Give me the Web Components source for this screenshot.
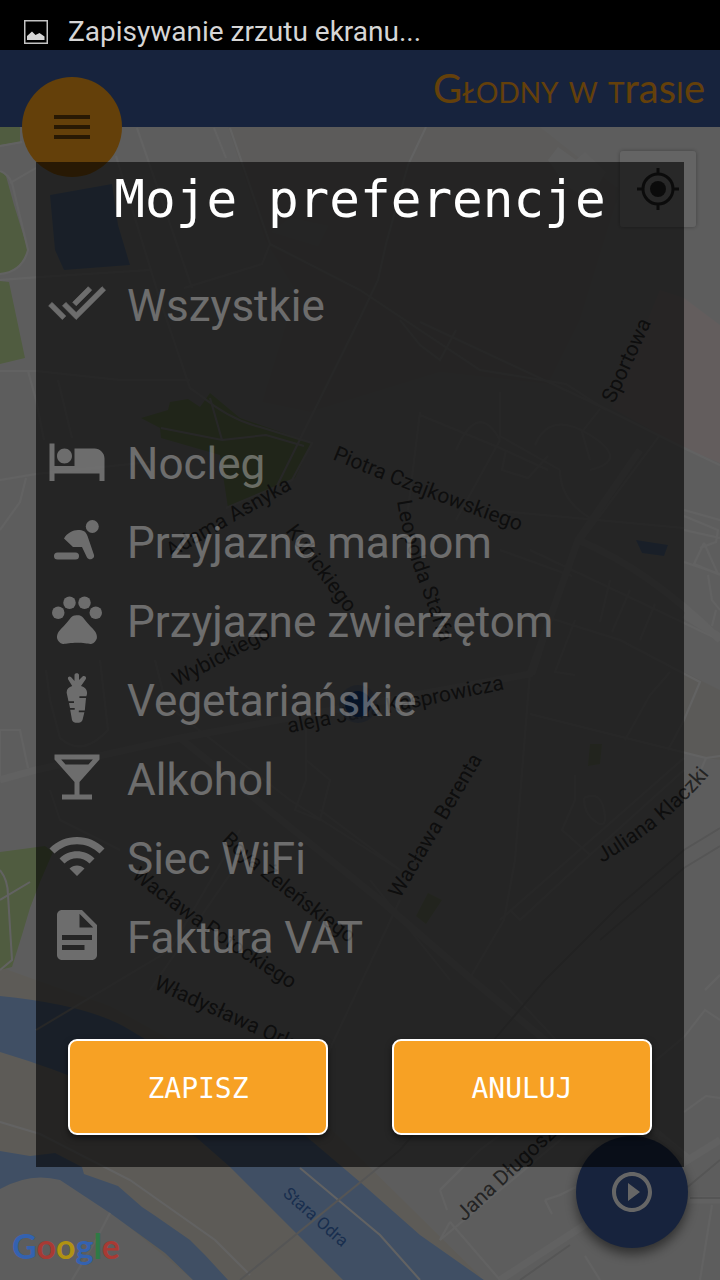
<!DOCTYPE html>
<html lang="pl">
<head>
<meta charset="utf-8">
<meta name="viewport" content="width=device-width, initial-scale=1">
<title>Głodny w trasie</title>
<style>
  body {
    margin: 0;
    background: #000;
    font-family: Roboto, "Noto Sans", sans-serif;
  }
</style>
</head>
<body>
<app-screen>
  <status-bar slot="status">Zapisywanie zrzutu ekranu...</status-bar>
  <title-bar slot="title"></title-bar>
  <city-map slot="map"></city-map>
  <round-button slot="menu" kind="menu" label="Menu"></round-button>
  <locate-button slot="locate"></locate-button>
  <round-button slot="start" kind="start" label="Start"></round-button>
  <google-logo slot="logo"></google-logo>
  <preferences-dialog heading="Moje preferencje">
    <preference-item slot="all" icon="all">Wszystkie</preference-item>
    <preference-item icon="bed">Nocleg</preference-item>
    <preference-item icon="baby">Przyjazne mamom</preference-item>
    <preference-item icon="paw">Przyjazne zwierzętom</preference-item>
    <preference-item icon="carrot">Vegetariańskie</preference-item>
    <preference-item icon="bar">Alkohol</preference-item>
    <preference-item icon="wifi">Siec WiFi</preference-item>
    <preference-item icon="invoice">Faktura VAT</preference-item>
    <action-button slot="actions">ZAPISZ</action-button>
    <action-button slot="actions">ANULUJ</action-button>
  </preferences-dialog>
</app-screen>

<script>
'use strict';

const icons = {
  all: `<svg viewBox="-0.25 0 24.500 24.500"><path stroke="#fff" stroke-width=".3" d="M18 7l-1.41-1.41-6.34 6.34 1.41 1.41L18 7zm4.24-1.41L11.66 16.17 7.48 12l-1.41 1.41L11.66 19l12-12-1.42-1.41zM.41 13.41L6 19l1.41-1.41L1.83 12 .41 13.41z"/></svg>`,
  bed: `<svg viewBox="0 0 24 24"><path d="M7 13c1.66 0 3-1.34 3-3S8.66 7 7 7s-3 1.34-3 3 1.34 3 3 3zm12-6h-8v7H3V5H1v15h2v-3h18v3h2v-9c0-2.21-1.79-4-4-4z"/></svg>`,
  baby: `<svg viewBox="0 -3 60 60"><circle cx="45.300" cy="13.500" r="6.500"/><rect x="7" y="39.500" width="25" height="7" rx="3.500"/><path d="M17 25.500C20 20 26 17 31 17c5 0 8 1.500 9.500 6L47 42c1 4-5 6-7 2.500L35 34h-9z"/></svg>`,
  paw: `<svg viewBox="0 0 24 24"><circle cx="4.500" cy="9.500" r="2.500"/><circle cx="9" cy="5.500" r="2.500"/><circle cx="15" cy="5.500" r="2.500"/><circle cx="19.500" cy="9.500" r="2.500"/><path d="M17.340 14.860c-.87-1.020-1.600-1.890-2.480-2.910-.46-.54-1.050-1.080-1.750-1.320-.11-.04-.22-.07-.33-.09-.25-.04-.52-.04-.78-.04s-.53 0-.79.05c-.11.020-.22.050-.33.090-.7.240-1.280.780-1.750 1.320-.87 1.020-1.600 1.890-2.480 2.910-1.310 1.310-2.920 2.760-2.620 4.790.29 1.020 1.020 2.030 2.330 2.320.73.150 3.060-.44 5.540-.44h.18c2.480 0 4.810.58 5.540.44 1.310-.29 2.040-1.310 2.330-2.320.31-2.040-1.300-3.490-2.610-4.800z"/></svg>`,
  carrot: `<svg viewBox="0 -3 60 60"><path d="M27.500 4c0-2.500 4.500-2.500 4.500 0v5l3.500-3.500c2-1.500 4.500.5 3.200 2.800L34 15c4 1 6.500 4 6 8l-.6 2.300h-7v1.600H39L37.800 39.400h-6v1.800h5.600L35.500 49c-1 3.800-9.500 3.800-10.500 0l-1.800-10.200h4.500v-1.700H23l-1-5h5v-1.800h-5.500L19.700 22c-.4-3.500 2-6 5.500-7l-4-6.500c-1.200-2.500 1.500-4 3-2.200L27.500 10z"/></svg>`,
  bar: `<svg viewBox="0 0 24 24"><path d="M21 5V3H3v2l8 9v5H6v2h12v-2h-5v-5l8-9zM7.430 7L5.660 5h12.690l-1.780 2H7.430z"/></svg>`,
  wifi: `<svg viewBox="0 0 24 24"><path d="M1 9l2 2c4.970-4.970 13.030-4.970 18 0l2-2C16.930 2.930 7.080 2.930 1 9zm8 8l3 3 3-3c-1.650-1.660-4.340-1.660-6 0zm-4-4l2 2c2.760-2.760 7.240-2.760 10 0l2-2C15.140 9.140 8.870 9.140 5 13z"/></svg>`,
  invoice: `<svg viewBox="0 0 24 24"><path d="M14 2H6c-1.100 0-2 .9-2 2v16c0 1.100.9 2 2 2h12c1.100 0 2-.9 2-2V8l-6-6zm4 12H6v-2h12v2zm-3 4H6v-2h9v2zm-2-9V3.500L18.500 9H13z"/></svg>`,
  menu: `<svg viewBox="0 0 24 24"><path d="M3 18h18v-2H3v2zm0-5h18v-2H3v2zm0-7v2h18V6H3z"/></svg>`,
  start: `<svg viewBox="0 0 24 24"><path d="M10 16.500l6-4.500-6-4.500v9zM12 2C6.480 2 2 6.480 2 12s4.480 10 10 10 10-4.480 10-10S17.520 2 12 2zm0 18c-4.410 0-8-3.590-8-8s3.590-8 8-8 8 3.590 8 8-3.590 8-8 8z"/></svg>`
};

// street names follow the line of their street
const labels = [
  ['Sportowa', 'M614 404L663 297'],
  ['Piotra Czajkowskiego', 'M332 459Q430 500 545 540'],
  ['Leopolda Staffa', 'M397 501Q403 540 418 580T460 700'],
  ['Adama Asnyka', 'M171 558L320 473'],
  ['Kubickiego', 'M285 531L378 656'],
  ['Wybickiego', 'M177 687L300 622'],
  ['aleja Jana Kasprowicza', 'M289 733Q400 711 540 682'],
  ['Wacława Berenta', 'M400 899L499 731'],
  ['Juliana Klaczki', 'M602 863Q682 817 726 752'],
  ['Boya Żeleńskiego', 'M221 841Q280 896 384 968'],
  ['Wacława Potockiego', 'M131 877Q200 934 334 1016'],
  ['Władysława Orkana', 'M153 988L380 1090'],
  ['Jana Długosza', 'M464 1222L616 1080']
];

function define(name, html, setup) {
  const template = document.createElement('template');
  template.innerHTML = html;
  customElements.define(name, class extends HTMLElement {
    connectedCallback() {
      if (this.shadowRoot) return;
      this.attachShadow({ mode: 'open' });
      this.shadowRoot.appendChild(template.content.cloneNode(true));
      if (setup) setup(this, this.shadowRoot);
    }
  });
}

define('app-screen', `
  <style>
    :host { display: flex; flex-direction: column; position: relative; min-height: 100vh; overflow: hidden; isolation: isolate; }
    .map, .scrim { position: absolute; inset: 0; }
    .map { z-index: -2; }
    .scrim { z-index: 1; top: 50px; background: rgba(0, 0, 0, .6); }
    .menu { position: absolute; left: 22px; top: 77px; }
    .locate { position: absolute; right: 24px; top: 151px; }
    .start { position: absolute; right: 32px; bottom: 32px; }
    .logo { position: absolute; left: 12px; bottom: 12px; z-index: 1; }
    main { position: relative; z-index: 2; padding: 35px 36px 113px; }
  </style>
  <div class="map"><slot name="map"></slot></div>
  <slot name="status"></slot>
  <slot name="title"></slot>
  <div class="menu"><slot name="menu"></slot></div>
  <div class="locate"><slot name="locate"></slot></div>
  <div class="start"><slot name="start"></slot></div>
  <div class="scrim"></div>
  <div class="logo"><slot name="logo"></slot></div>
  <main><slot></slot></main>
`);

define('status-bar', `
  <style>
    :host { display: flex; align-items: center; gap: 20px; box-sizing: border-box; height: 50px; padding: 14px 24px 0; background: #000; color: #d6d6d6; font-size: 28px; line-height: 36px; }
    svg { width: 24px; height: 24px; }
  </style>
  <svg viewBox="0 0 24 24" aria-hidden="true">
    <rect x="0.750" y="0.750" width="22.500" height="22.500" fill="none" stroke="#c4c4c4" stroke-width="1.500"/>
    <path d="M3 20v-4l5-4.500 3.500 3.500 4-2 5 3.500V20z" fill="#d6d6d6"/>
  </svg>
  <span><slot></slot></span>
`);

define('title-bar', `
  <style>
    :host { display: block; height: 77px; padding-right: 15px; background: #3b5998; color: #f9a11b; text-align: right; box-sizing: border-box; }
    h1 { margin: 0; font: 400 40px/76px Lato, sans-serif; }
    span { font-variant: small-caps; }
  </style>
  <h1><span>Głodny w t</span>ras<span>i</span>e</h1>
`);

define('round-button', `
  <style>
    :host { display: block; }
    button { display: grid; place-items: center; width: 112px; height: 112px; padding: 0; border: 0; border-radius: 50%; background: #3b5998; fill: #fff; box-shadow: 0 6px 12px rgba(0, 0, 0, .5); }
    svg { display: block; width: 48px; height: 48px; }
    :host([kind="menu"]) button { width: 100px; height: 100px; background: #f9a11b; fill: rgba(0, 0, 0, .6); box-shadow: none; }
  </style>
  <button type="button"></button>
`, (host, root) => {
  const button = root.querySelector('button');
  button.setAttribute('aria-label', host.getAttribute('label'));
  button.innerHTML = icons[host.getAttribute('kind')];
});

define('locate-button', `
  <style>
    :host { display: block; }
    button { display: grid; place-items: center; width: 76px; height: 76px; padding: 0; border: 0; border-radius: 3px; background: rgba(255, 255, 255, .7); box-shadow: 0 0 4px rgba(0, 0, 0, .3); }
    svg { width: 44px; height: 44px; }
  </style>
  <button type="button" aria-label="Moja lokalizacja">
    <svg viewBox="0 0 44 44" fill="none" stroke="#484848" stroke-width="3">
      <circle cx="22" cy="22" r="15"/>
      <circle cx="22" cy="22" r="8" fill="#484848" stroke="none"/>
      <path d="M22 1v7M22 36v7M1 22h7M36 22h7"/>
    </svg>
  </button>
`);

define('google-logo', `
  <style>
    :host { display: block; font: 700 34px/44px Lato, sans-serif; }
    .b { color: #3462b0; } .r { color: #a83a34; } .y { color: #b09212; } .g { color: #2f7a45; }
  </style>
  <span class="b">G</span><span class="r">o</span><span class="y">o</span><span class="b">g</span><span class="g">l</span><span class="r">e</span>
`);

define('preferences-dialog', `
  <style>
    :host { display: block; background: rgba(0, 0, 0, .6); }
    h2 { margin: 0 0 28px; color: #fff; font: 400 51px/76px "DejaVu Sans Mono", monospace; text-align: center; }
    .list { display: flex; flex-direction: column; margin-top: 79px; }
    footer { display: flex; gap: 64px; padding: 62px 32px 32px; }
  </style>
  <section role="dialog" aria-labelledby="heading">
    <h2 id="heading"></h2>
    <slot name="all"></slot>
    <div class="list"><slot></slot></div>
    <footer><slot name="actions"></slot></footer>
  </section>
`, (host, root) => {
  root.querySelector('h2').textContent = host.getAttribute('heading');
});

define('preference-item', `
  <style>
    :host { display: block; }
    button { display: flex; align-items: center; gap: 20px; width: 100%; height: 79px; padding: 0 11px; border: 0; background: none; color: #fff; fill: #fff; font: inherit; font-size: 44px; line-height: 56px; text-align: left; opacity: .33; }
    button[aria-pressed="true"] { opacity: 1; }
    svg { display: block; width: 60px; height: 60px; margin-bottom: 6px; }
  </style>
  <button type="button" aria-pressed="false">
    <span class="icon" aria-hidden="true"></span>
    <span><slot></slot></span>
  </button>
`, (host, root) => {
  const button = root.querySelector('button');
  root.querySelector('.icon').innerHTML = icons[host.getAttribute('icon')];
  button.addEventListener('click', () => {
    button.setAttribute('aria-pressed', button.getAttribute('aria-pressed') !== 'true');
  });
});

define('action-button', `
  <style>
    :host { display: block; flex: 1; }
    button { width: 100%; height: 96px; padding: 3px 0 0; border: 2px solid #fff; border-radius: 9px; background: #f7a124; color: #fff; font: 400 28px/36px "DejaVu Sans Mono", monospace; box-shadow: 0 3px 6px rgba(0, 0, 0, .5); }
  </style>
  <button type="button"><slot></slot></button>
`);

define('city-map', `
  <style>
    :host { display: block; height: 100%; }
    svg { display: block; width: 100%; height: 100%; font-size: 21px; }
    .water { fill: #a0c6fa; }
    .green { fill: #c8e6a0; }
    .lawn { fill: #d6e4bc; }
    .road { fill: none; stroke: #f6f6f6; stroke-width: 2; }
    .main { stroke-width: 7; stroke: #f3f3f3; }
    .rail { fill: none; stroke: #d4d4d4; stroke-width: 2; }
    .street { fill: #5a5a5a; }
    .river { fill: #3f74c4; font-size: 17px; }
  </style>
  <svg viewBox="0 0 720 1280" preserveAspectRatio="xMidYMin slice" role="img" aria-label="Mapa">
    <rect width="720" height="1280" fill="#e9e9e9"/>
    <path d="M228 127H540L620 190 580 320 548 384 440 372 310 412 262 402 296 292 265 240z" fill="#e5e4e1"/>
    <path d="M660 290L684 298 720 325V463L684 448 612 408z" fill="#f7e8e9"/>
    <path d="M684 672L720 690V760L706 758 684 752z" fill="#e4e2dd"/>
    <path d="M548 160L558 147 576 160 585 152 606 172 590 200 566 186z" fill="#eee"/>
    <path d="M272 232L290 218 328 226 318 246z" fill="#ececec"/>
    <path d="M0 967L36 980 110 1006 330 1128 480 1276 480 1280H0z" fill="#e9e4d9"/>
    <path d="M0 1189Q40 1168 75 1182L193 1280H0z" fill="#e9e9e9"/>
    <path class="water" d="M0 996Q90 1005 130 1030L307 1137 360 1182 420 1235 484 1280H343L230 1167 197 1138Q110 1085 0 1052z"/>
    <path class="water" d="M0 1151L30 1156 55 1153 82 1167 84 1174 118 1186 142 1207 154 1215 190 1240 205 1255 228 1280H193L165 1253 110 1213 60 1180Q30 1172 0 1189z"/>
    <path class="water" d="M50 195L112 184 118 225 130 265 64 270 55 250z"/>
    <path class="water" d="M636 540L668 545 664 556 642 553z"/>
    <path class="green" d="M0 127H20V142L0 145zM0 170L6 176 14 205 28 250Q20 274 0 274zM0 281L9 282 25 358 0 364z"/>
    <path class="green" d="M0 852L45 846 53 852 40 882 30 908 22 935 12 967 0 970z"/>
    <path class="green" d="M141 418L168 410 170 402 188 399 200 407 210 393 240 418 312 443 295 478 280 486 228 508 220 455 161 438 160 428z"/>
    <path class="lawn" d="M590 744H602L600 764 588 766zM428 893L442 900 426 924 416 916z"/>
    <g class="road">
      <path d="M0 146L22 142M0 280L40 277 150 270M10 183L36 168M0 171Q8 174 12 183L28 250Q22 272 0 274M0 371H36L120 380H190"/>
      <path d="M137 128L192 288M230 128L270 244 262 264 184 288M214 128L226 158M116 156L160 300 190 388 200 395"/>
      <path d="M426 127L408 165 386 244 378 280 360 318 270 500M270 244L360 290 480 370 566 384 606 410"/>
      <path d="M28 371L36 400 44 440M0 480L36 474 150 462M26 478L20 502 0 530M58 380L72 438"/>
      <path d="M200 395Q230 420 260 427L312 443 292 480 226 508M210 398L222 440 161 428M222 440L266 435 304 446"/>
      <path d="M400 320L420 345 440 360 456 330M420 322L606 409 684 448 720 465M600 409L582 432 590 460M660 435L582 540"/>
      <path d="M420 412L408 510M420 415L500 448 548 470M500 392V436L560 470M456 450Q478 400 500 440M500 440L456 520M506 450L502 470 528 478 548 456M535 445Q550 410 590 435T590 470M560 470Q560 500 590 518"/>
      <path d="M684 510L720 520M684 516L718 530 716 542 700 548M684 530L720 538M704 543L694 564 718 574 704 543M684 562L720 574M708 575L712 600 720 610M716 610L712 626M490 510L684 528M500 550L572 576M610 580L600 622M630 590L612 632M655 604L640 640"/>
      <path d="M555 610L534 675M575 620L555 672 575 675M540 615L620 640 700 682 684 720 668 750M670 672L650 695 625 740M530 714L706 758 720 756M706 758L700 772M530 550L720 640"/>
      <path d="M530 672L515 860 504 920 470 978M575 775V800L562 830 590 855 684 770M584 798Q600 790 604 810T596 822T584 798M590 855L520 920 510 910M684 758L500 920"/>
      <path d="M0 780L0 730 20 730 28 768M46 670L50 700 60 738Q82 758 108 730L100 660M155 660L165 700M50 790L60 820 120 850M160 700L290 800 400 870M306 720V780L295 810 320 820 330 780 306 760M320 810L400 870M240 860L150 990M36 1030L170 950 240 830M370 880L450 980M320 1070L400 900"/>
      <path d="M0 870Q8 880 8 895L12 960 0 970M0 900L30 882M684 1037L705 1010 720 1020M705 990L720 975M440 1190L480 1150 520 1120M440 1190L447 1210M545 1200L560 1195 580 1185M545 1200L552 1214M450 1222L500 1280M450 1222L440 1240M684 1112L706 1096 720 1098M712 1205L700 1280M585 1256L600 1280M300 1168L380 1235 420 1280"/>
      <path d="M0 1122L40 1134 130 1180 215 1240 250 1275M110 1213L96 1240 72 1280M500 980L640 1130M684 1037L440 1240"/>
    </g>
    <g class="road main">
      <path d="M0 780L36 770 180 738 300 716 530 674 578 540 640 450"/>
      <path d="M578 540Q650 570 720 640M684 615L720 637M180 738L380 900 470 978 690 1160"/>
      <path d="M500 1280L600 1215 720 1140M688 1200H720"/>
    </g>
    <path class="rail" d="M545 980L620 905 684 850 720 828M600 940L684 868 720 846M545 980L400 1150 240 1280M520 1280L570 1245M690 1198H720M684 1190L720 1160"/>
    <g class="labels"></g>
    <circle cx="358" cy="704" r="19" fill="#a4c3f3" opacity=".6"/>
    <circle cx="358" cy="704" r="13" fill="#2f7df6"/>
  </svg>
`, (host, root) => {
  const river = ['Stara Odra', 'M282 1195L374 1276'];
  root.querySelector('.labels').innerHTML = [...labels, river].map(([text, d], i) => `
    <path id="line${i}" d="${d}" fill="none"/>
    <text class="${text === river[0] ? 'river' : 'street'}"><textPath href="#line${i}">${text}</textPath></text>
  `).join('');
});
</script>
</body>
</html>
